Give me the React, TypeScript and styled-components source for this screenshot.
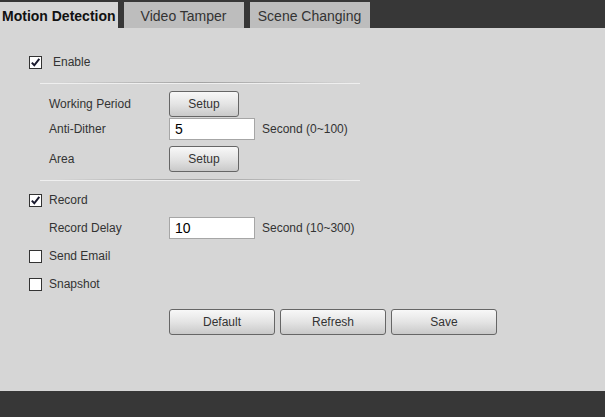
import styled, { createGlobalStyle } from "styled-components";

const Global = createGlobalStyle`
  html, body {
    margin: 0;
    padding: 0;
    height: 100%;
    background: #d6d6d6;
    font-family: "Liberation Sans", Arial, sans-serif;
  }
  #root {
    height: 100%;
  }
`;

const Page = styled.div`
  height: 100%;
  display: flex;
  flex-direction: column;
  background: #d6d6d6;
`;

const TabBar = styled.div`
  height: 28px;
  box-sizing: border-box;
  padding-top: 2px;
  background: #373737;
  display: flex;
  align-items: stretch;
  gap: 6px;
`;

const Tab = styled.div<{ $active?: boolean }>`
  display: flex;
  align-items: center;
  justify-content: center;
  box-sizing: border-box;
  min-width: ${({ $active }) => ($active ? "117px" : "120px")};
  padding: 1px 2px 0;
  font-size: 14px;
  font-weight: ${({ $active }) => ($active ? 700 : 400)};
  color: ${({ $active }) => ($active ? "#111" : "#333")};
  background: ${({ $active }) => ($active ? "#d6d6d6" : "#bdbdbd")};
`;

const Content = styled.div`
  flex: 1;
  padding: 20px 0 0 29px;
  color: #333;
  font-size: 12px;
`;

const Footer = styled.div`
  height: 26px;
  background: #373737;
`;

const CheckRow = styled.label<{ $h: number; $gap: number }>`
  display: flex;
  align-items: center;
  height: ${({ $h }) => $h}px;
  gap: ${({ $gap }) => $gap}px;
`;

const Box = styled.span`
  width: 11px;
  height: 11px;
  border: 1px solid #333;
  background: #fff;
  display: flex;
  align-items: center;
  justify-content: center;
  flex-shrink: 0;
`;

const Divider = styled.div<{ $top: number; $bottom: number }>`
  margin: ${({ $top }) => $top}px 245px ${({ $bottom }) => $bottom}px 11px;
  height: 1px;
  background: linear-gradient(
    to right,
    rgba(160, 160, 160, 0) 5%,
    #a2a2a2 50%,
    rgba(160, 160, 160, 0) 98%
  );
  box-shadow: 0 1px 0 rgba(255, 255, 255, 0.6);
`;

const FieldRow = styled.div<{ $h: number }>`
  display: grid;
  grid-template-columns: 113px auto auto;
  justify-content: start;
  align-items: center;
  column-gap: 7px;
  height: ${({ $h }) => $h}px;
  padding-left: 20px;
`;

const Label = styled.span`
  color: #333;
`;

const Btn = styled.button<{ $w: number }>`
  width: ${({ $w }) => $w}px;
  height: 26px;
  box-sizing: border-box;
  border: 1px solid #666;
  border-radius: 3px;
  background: linear-gradient(to bottom, #f8f8f8, #e4e4e4 50%, #c9c9c9);
  font-family: "Liberation Sans", Arial, sans-serif;
  font-size: 12px;
  color: #333;
  padding: 0;
  cursor: pointer;
`;

const Input = styled.input`
  width: 86px;
  height: 22px;
  box-sizing: border-box;
  border: 1px solid #a6a6a6;
  background: #fff;
  padding: 0 5px;
  font-family: "Liberation Sans", Arial, sans-serif;
  font-size: 14px;
  color: #000;
  outline: none;
`;

const Hint = styled.span`
  color: #333;
`;

const Actions = styled.div`
  display: flex;
  gap: 5px;
  padding-left: 140px;
  margin-top: 11px;
`;

function Check({ on }: { on?: boolean }) {
  return (
    <Box>
      {on && (
        <svg width="11" height="11" viewBox="0 0 11 11">
          <path d="M1.8 5.6 L4.3 8.3 L9.3 1.8" fill="none" stroke="#1a1a2e" strokeWidth="2" />
        </svg>
      )}
    </Box>
  );
}

export default function App() {
  return (
    <Page>
      <Global />
      <TabBar>
        <Tab $active>Motion Detection</Tab>
        <Tab>Video Tamper</Tab>
        <Tab>Scene Changing</Tab>
      </TabBar>
      <Content>
        <CheckRow $h={28} $gap={11}>
          <Check on />
          <span>Enable</span>
        </CheckRow>
        <Divider $top={6} $bottom={7} />
        <FieldRow $h={28}>
          <Label>Working Period</Label>
          <Btn $w={70}>Setup</Btn>
        </FieldRow>
        <FieldRow $h={22}>
          <Label>Anti-Dither</Label>
          <Input defaultValue="5" />
          <Hint>Second (0~100)</Hint>
        </FieldRow>
        <FieldRow $h={37}>
          <Label>Area</Label>
          <Btn $w={70}>Setup</Btn>
        </FieldRow>
        <Divider $top={2} $bottom={6} />
        <CheckRow $h={28} $gap={7}>
          <Check on />
          <span>Record</span>
        </CheckRow>
        <FieldRow $h={28}>
          <Label>Record Delay</Label>
          <Input defaultValue="10" />
          <Hint>Second (10~300)</Hint>
        </FieldRow>
        <CheckRow $h={28} $gap={7}>
          <Check />
          <span>Send Email</span>
        </CheckRow>
        <CheckRow $h={28} $gap={7}>
          <Check />
          <span>Snapshot</span>
        </CheckRow>
        <Actions>
          <Btn $w={106}>Default</Btn>
          <Btn $w={106}>Refresh</Btn>
          <Btn $w={106}>Save</Btn>
        </Actions>
      </Content>
      <Footer />
    </Page>
  );
}
